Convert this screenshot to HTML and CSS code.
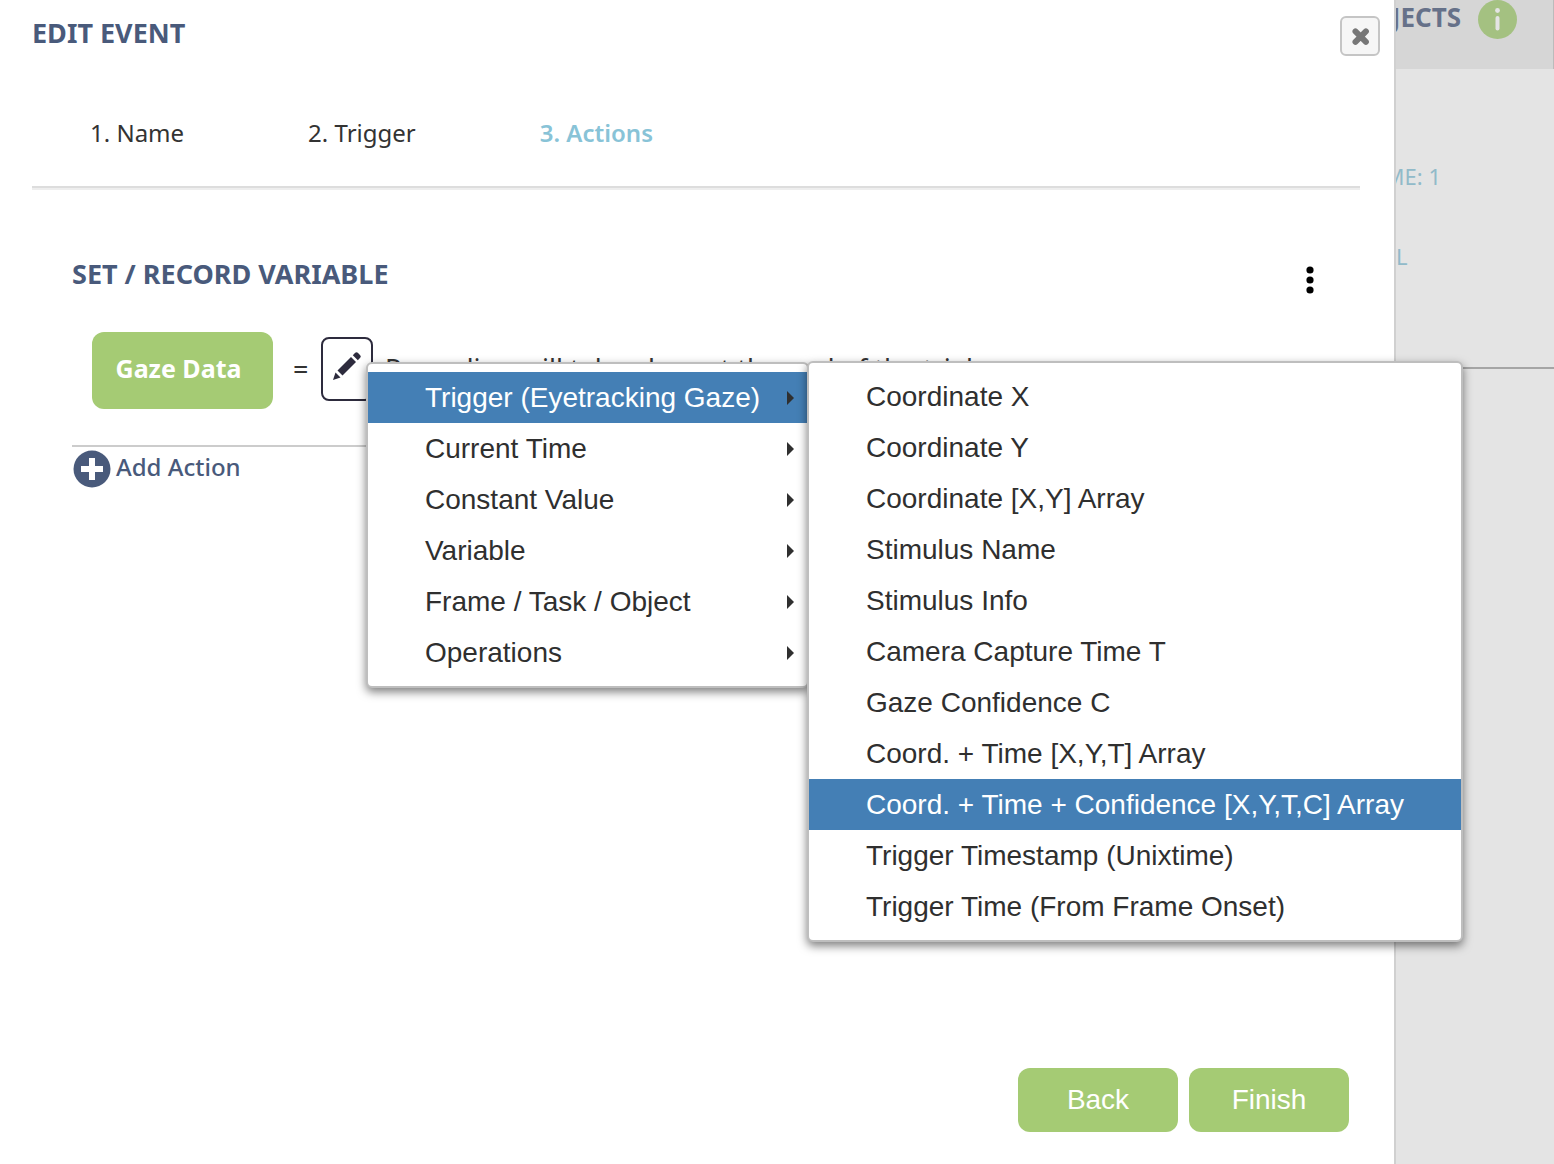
FILE: index.html
```
<!DOCTYPE html>
<html lang="en">
<head>
<meta charset="utf-8">
<title>Edit Event</title>
<meta name="viewport" content="width=device-width,initial-scale=1.0">
<link rel="stylesheet" href="styles.css">
</head>
<body>
<div class="dialog">
	<button type="button" class="close" aria-label="Close">
		<svg width="22" height="22" viewBox="0 0 22 22"><path d="M6 6L17.5 17.5M17.5 6L6 17.5" stroke="#777" stroke-width="6.5" stroke-linecap="round"/></svg>
	</button>
	<h1 class="title">EDIT EVENT</h1>
	<ol class="steps">
		<li>1. Name</li>
		<li>2. Trigger</li>
		<li class="current">3. Actions</li>
	</ol>
	<div class="action">
		<div class="acthead">
			<h2 class="title">SET / RECORD VARIABLE</h2>
			<button type="button" class="more" aria-label="More">
				<svg width="8" height="28" viewBox="0 0 8 28"><circle cx="4" cy="4" r="3.6"/><circle cx="4" cy="14" r="3.6"/><circle cx="4" cy="24" r="3.6"/></svg>
			</button>
		</div>
		<div class="actrow">
			<button type="button" class="btn variable">Gaze Data</button>
			<span class="equals">=</span>
			<div class="value">
				<button type="button" class="edit" aria-label="Edit value">
					<svg width="30" height="30" viewBox="0 0 30 30" fill="#2d2b3d"><path d="M1 29L3.5 21.5L8.5 26.5Z"/><path d="M5.5 19.5L19 6L24 11L10.5 24.5Z"/><path d="M20.8 4.2L23.2 1.8Q24.5 .6 25.8 1.8L28.2 4.2Q29.4 5.5 28.2 6.8L25.8 9.2Z"/></svg>
				</button>
				<!-- value menu -->
				<ul class="menu">
					<li class="item sub on">Trigger (Eyetracking Gaze)
						<ul class="menu submenu">
							<li class="item">Coordinate X</li>
							<li class="item">Coordinate Y</li>
							<li class="item">Coordinate [X,Y] Array</li>
							<li class="item">Stimulus Name</li>
							<li class="item">Stimulus Info</li>
							<li class="item">Camera Capture Time T</li>
							<li class="item">Gaze Confidence C</li>
							<li class="item">Coord. + Time [X,Y,T] Array</li>
							<li class="item on">Coord. + Time + Confidence [X,Y,T,C] Array</li>
							<li class="item">Trigger Timestamp (Unixtime)</li>
							<li class="item">Trigger Time (From Frame Onset)</li>
						</ul>
					</li>
					<li class="item sub">Current Time</li>
					<li class="item sub">Constant Value</li>
					<li class="item sub">Variable</li>
					<li class="item sub">Frame / Task / Object</li>
					<li class="item sub">Operations</li>
				</ul>
			</div>
			<span class="note">Recording will take place at the end of the trial.</span>
		</div>
	</div>
	<button type="button" class="add">
		<svg width="38" height="38" viewBox="0 0 38 38"><circle cx="19" cy="19" r="18.5" fill="#495a7b"/><path d="M19 8V30M8 19H30" stroke="#fff" stroke-width="6"/></svg>
		<span>Add Action</span>
	</button>
	<div class="footer">
		<button type="button" class="btn">Back</button>
		<button type="button" class="btn">Finish</button>
	</div>
</div>
<div class="side">
	<div class="sidehead">
		<span>JECTS</span>
		<svg width="39" height="39" viewBox="0 0 39 39"><circle cx="19.5" cy="19.5" r="19.5" fill="#a4c181"/><circle cx="19.5" cy="10.5" r="2.4" fill="#e4e4e4"/><path d="M19.5 18V28.5" stroke="#e4e4e4" stroke-width="4" stroke-linecap="round"/></svg>
	</div>
	<div class="sidebody">
		<p class="frame">ME: 1</p>
		<p class="label">L</p>
	</div>
</div>
</body>
</html>
```

FILE: styles.css
```
* { margin:0; padding:0; box-sizing:border-box; }
body { display:flex; min-height:100vh; background:#e4e4e4; color:#333; font:24px/38px "Noto Sans", "Open Sans", sans-serif; overflow-x:hidden; }
ul, ol { list-style:none; }
button { font:inherit; border:0; background:none; cursor:pointer; }
svg { display:block; }

.dialog { position:relative; flex:1; display:flex; flex-direction:column; padding:14px 34px 32px 32px; background:#fff; border-right:2px solid #d0d0d0; }
.title { font-size:27px; font-weight:700; line-height:38px; color:#495a7b; }
.close { position:absolute; top:16px; right:14px; width:40px; height:40px; padding:8px; display:flex; align-items:center; justify-content:center; background:#f6f6f6; border:2px solid #c5c5c5; border-radius:6px; }

.steps { display:flex; gap:124px; margin-top:62px; padding:0 58px 34px; border-bottom:2px solid #ddd; box-shadow:0 2px 0 #eee; }
.steps .current { color:#88c3d7; font-weight:600; }

.action { margin:67px 40px 0; padding-bottom:36px; border-bottom:2px solid #ccc; }
.acthead { display:flex; justify-content:space-between; align-items:center; height:38px; }
.more { padding:12px 6px 0; }
.actrow { display:flex; align-items:center; margin:39px 20px 0; }
.btn { min-width:160px; height:64px; background:#a5cb74; color:#fff; border-radius:12px; font:28px/64px "Liberation Sans", Arial, sans-serif; }
.variable { min-width:181px; height:77px; padding:0 8px 6px 0; font:700 25px/38px "Noto Sans", "Open Sans", sans-serif; }
.equals { width:48px; padding:0 0 4px 20px; font-size:27px; }
.value { position:relative; padding-bottom:4px; }
.edit { display:flex; align-items:center; justify-content:center; width:52px; height:64px; padding-bottom:6px; border:2px solid #2d2b3d; border-radius:8px; }
.note { margin-left:12px; padding-bottom:4px; font-size:27px; white-space:nowrap; }

.menu { position:absolute; z-index:5; top:25px; left:45px; width:443px; padding:8px 0 8px; background:#fff; border:2px solid #bebebe; border-radius:6px; box-shadow:0 4px 10px rgba(0,0,0,.5); font:28px/51px "Liberation Sans", Arial, sans-serif; color:#2f2f2f; }
.item { position:relative; padding-left:57px; white-space:nowrap; }
.on { background:#447fb5; color:#fff; }
.sub:after { content:""; position:absolute; top:19px; right:13px; border:7px solid transparent; border-left-color:#2f2f2f; border-right:0; }
.submenu { top:-11px; left:100%; width:656px; }

.add { display:flex; align-items:center; gap:5px; align-self:flex-start; margin:1px 0 0 41px; color:#495a7b; font-weight:500; }
.add span { padding-bottom:4px; }
.footer { display:flex; justify-content:flex-end; gap:11px; margin-top:auto; padding-right:11px; }

.side { width:158px; overflow:hidden; }
.sidehead { display:flex; justify-content:flex-end; gap:17px; height:69px; padding-right:36px; background:#d6d6d6; border-right:1px solid #bbb; color:#667189; font-size:26px; font-weight:700; line-height:34px; }
.sidehead svg { flex:none; }
.sidebody { height:300px; padding-top:88px; border-bottom:2px solid #a5a5a5; color:#91bac9; font-size:22px; }
.frame { display:flex; justify-content:flex-end; width:45px; white-space:nowrap; }
.label { margin-top:42px; }
```
